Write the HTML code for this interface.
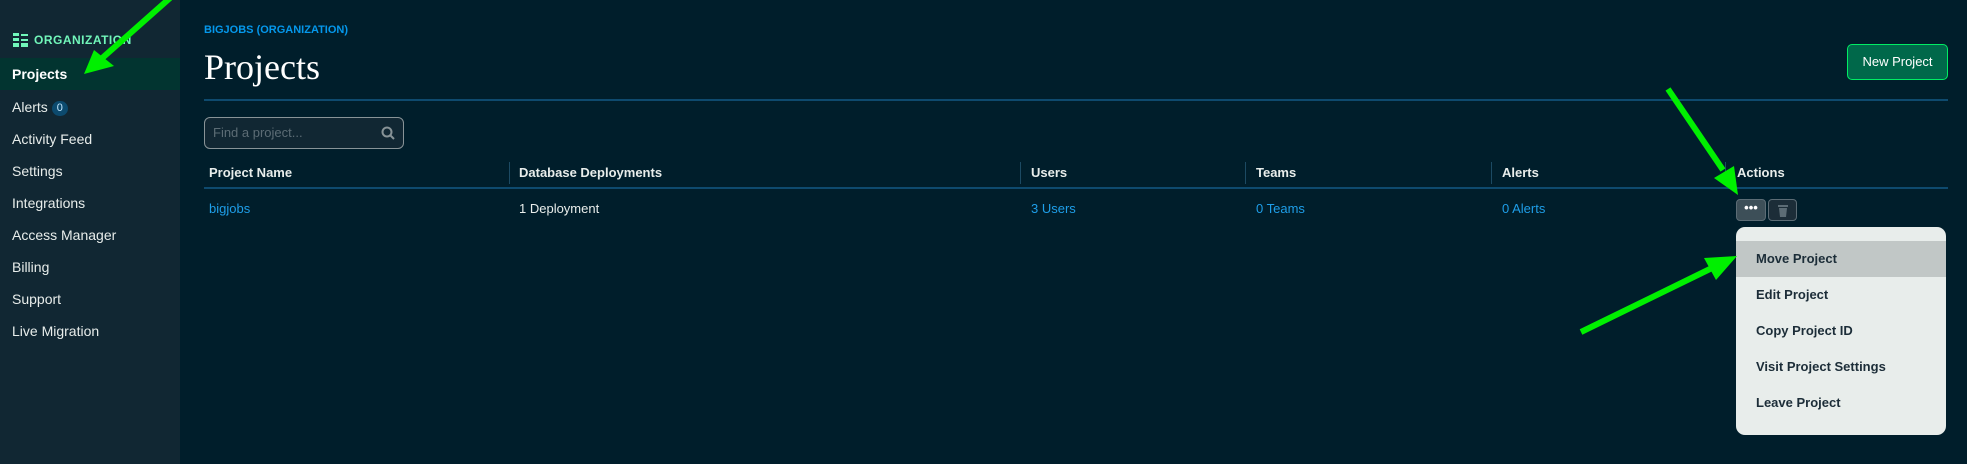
<!DOCTYPE html>
<html><head><meta charset="utf-8"><style>
*{margin:0;padding:0;box-sizing:border-box}
body{width:1967px;height:464px;overflow:hidden;background:#001e2b;font-family:"Liberation Sans",sans-serif;position:relative;color:#e8edeb}
.side{position:absolute;left:0;top:0;width:180px;height:464px;background:#112733}
.org{position:absolute;left:13px;top:33px;font-size:12px;font-weight:bold;color:#71f6ba;letter-spacing:.5px;display:flex;align-items:center;gap:6px}
.nav{position:absolute;left:0;width:180px;height:32px;line-height:32px;padding-left:12px;font-size:14px;color:#e8edeb}
.nav.act{background:#023430;font-weight:bold;color:#fff}
.badge{display:inline-block;background:#0c4a6e;color:#c3e7fe;border-radius:8px;font-size:11px;line-height:15px;padding:0 5px;margin-left:4px;vertical-align:1px}
.abs{position:absolute}
.blue{color:#1e9ee8}
.th{position:absolute;top:165px;font-size:13px;font-weight:bold;color:#e8edeb}
.td{position:absolute;top:201px;font-size:13px}
.sep{position:absolute;top:162px;width:1px;height:22px;background:#1c4a63}
.mi{position:absolute;left:0;width:210px;height:36px;line-height:36px;padding-left:20px;font-size:13px;font-weight:bold;color:#1c2d38}
</style></head><body>
<div class="side">
<div class="org"><svg width="15" height="14" viewBox="0 0 15 14" fill="#71f6ba"><rect x="0" y="0" width="6" height="3"/><rect x="0" y="5" width="6" height="3"/><rect x="0" y="10" width="6" height="4"/><rect x="8" y="1" width="7" height="2"/><rect x="8" y="6" width="7" height="2"/><rect x="8" y="10" width="7" height="4"/></svg>ORGANIZATION</div>
<div class="nav act" style="top:58px">Projects</div>
<div class="nav" style="top:91px">Alerts<span class="badge">0</span></div>
<div class="nav" style="top:123px">Activity Feed</div>
<div class="nav" style="top:155px">Settings</div>
<div class="nav" style="top:187px">Integrations</div>
<div class="nav" style="top:219px">Access Manager</div>
<div class="nav" style="top:251px">Billing</div>
<div class="nav" style="top:283px">Support</div>
<div class="nav" style="top:315px">Live Migration</div>
</div>
<div class="abs blue" style="left:204px;top:24px;font-size:11px;font-weight:bold;color:#0498ec">BIGJOBS (ORGANIZATION)</div>
<div class="abs" style="left:204px;top:46px;font-family:'Liberation Serif',serif;font-size:36px;color:#fff">Projects</div>
<div class="abs" style="left:1847px;top:44px;width:101px;height:36px;background:#00684a;border:1px solid #00ed64;border-radius:5px;color:#fff;font-size:13px;line-height:34px;text-align:center">New Project</div>
<div class="abs" style="left:204px;top:99px;width:1744px;height:2px;background:#0e4a6e"></div>
<div class="abs" style="left:204px;top:117px;width:200px;height:32px;border:1px solid #889397;border-radius:6px;background:#112733;color:#5c6c75;font-size:13px;line-height:30px;padding-left:8px">Find a project...
<svg class="abs" style="right:8px;top:8px" width="14" height="14" viewBox="0 0 14 14" fill="none" stroke="#889397" stroke-width="2"><circle cx="6" cy="6" r="4.5"/><path d="M9.5 9.5L13 13"/></svg></div>
<div class="th" style="left:209px">Project Name</div>
<div class="th" style="left:519px">Database Deployments</div>
<div class="th" style="left:1031px">Users</div>
<div class="th" style="left:1256px">Teams</div>
<div class="th" style="left:1502px">Alerts</div>
<div class="th" style="left:1737px">Actions</div>
<div class="sep" style="left:509px"></div><div class="sep" style="left:1020px"></div><div class="sep" style="left:1245px"></div><div class="sep" style="left:1491px"></div><div class="sep" style="left:1725px"></div>
<div class="abs" style="left:204px;top:187px;width:1744px;height:2px;background:#0e4a6e"></div>
<div class="td blue" style="left:209px">bigjobs</div>
<div class="td" style="left:519px">1 Deployment</div>
<div class="td blue" style="left:1031px">3 Users</div>
<div class="td blue" style="left:1256px">0 Teams</div>
<div class="td blue" style="left:1502px">0 Alerts</div>
<div class="abs" style="left:1736px;top:199px;width:30px;height:22px;background:#3d4f58;border:1px solid #5c6c75;border-radius:4px;color:#fff;font-size:13px;line-height:16px;text-align:center;font-weight:bold">•••</div>
<div class="abs" style="left:1768px;top:199px;width:29px;height:22px;background:#1c2d38;border:1px solid #5c6c75;border-radius:4px"><svg class="abs" style="left:9px;top:5px" width="10" height="12" viewBox="0 0 10 12" fill="#5c6c75"><rect x="0" y="0" width="10" height="2"/><path d="M1 3h8l-1 9H2z"/></svg></div>
<div class="abs" style="left:1736px;top:227px;width:210px;height:208px;background:#e8edeb;border-radius:9px;overflow:hidden">
<div class="mi" style="top:14px;background:#c1c7c6">Move Project</div>
<div class="mi" style="top:50px">Edit Project</div>
<div class="mi" style="top:86px">Copy Project ID</div>
<div class="mi" style="top:122px">Visit Project Settings</div>
<div class="mi" style="top:158px">Leave Project</div>
</div>
<svg class="abs" style="left:0;top:0" width="1967" height="464">
<g stroke="#00f000" stroke-width="6" fill="#00f000">
<line x1="170" y1="-2" x2="100" y2="60"/><polygon stroke="none" points="84,74 94,50 114,66"/>
<line x1="1668" y1="89" x2="1723" y2="170"/><polygon stroke="none" points="1738,195 1714,178 1734,166"/>
<line x1="1581" y1="332" x2="1712" y2="268"/><polygon stroke="none" points="1737,256 1716,280 1704,258"/>
</g></svg>
</body></html>
